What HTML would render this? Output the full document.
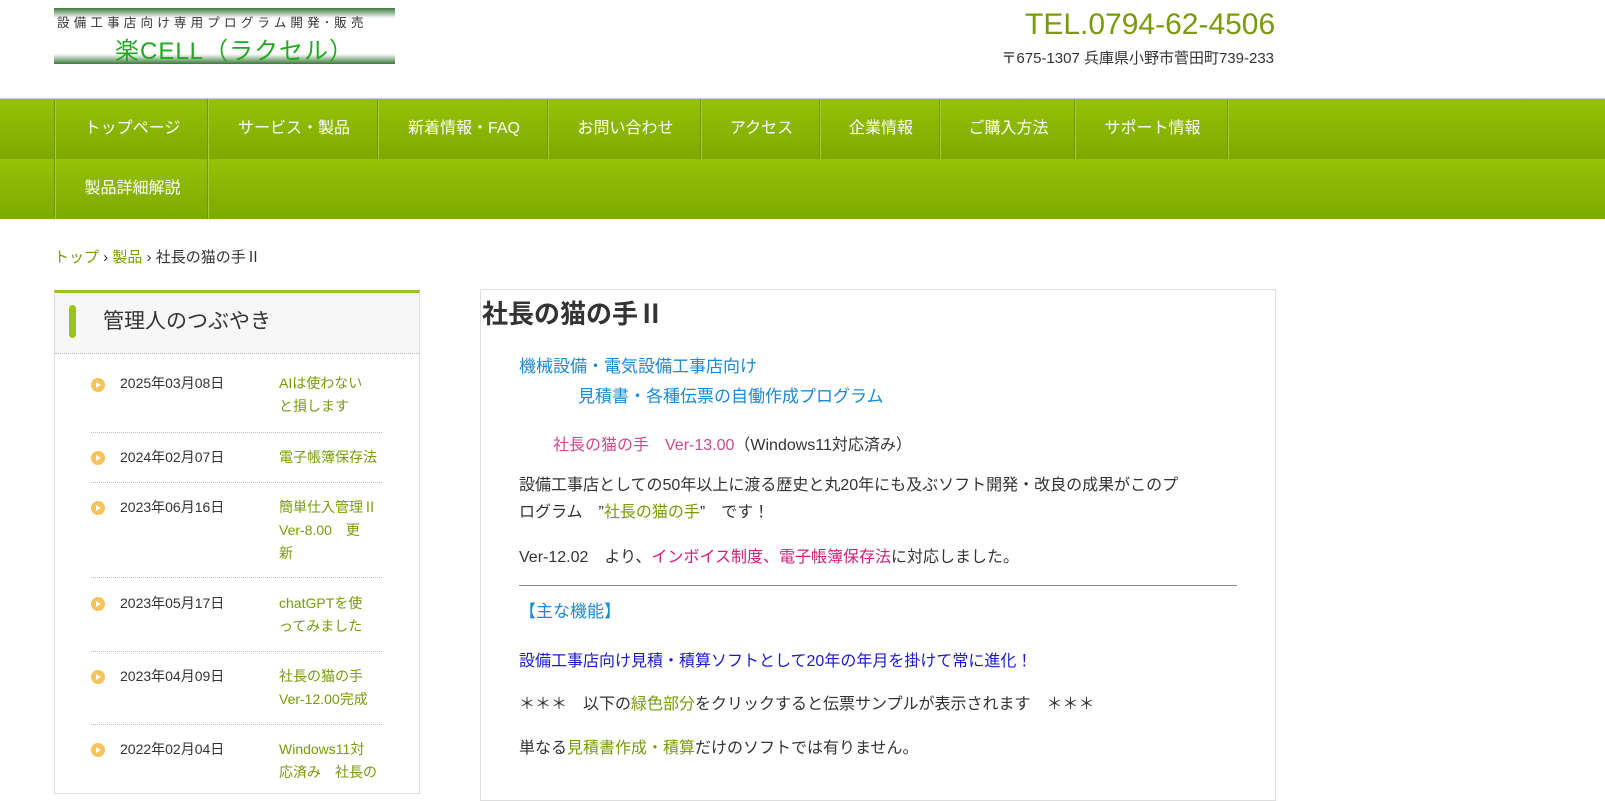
<!DOCTYPE html>
<html><head><meta charset="utf-8"><style>
body{margin:0;width:1605px;height:787px;overflow:hidden;background:#fff;font-family:"Liberation Sans","Noto Sans CJK JP",sans-serif;color:#333}
.a{position:absolute}
.nav{position:absolute;left:0;top:98px;width:1605px;height:120px;background:#8ab500;border-top:1px solid #ccc}
.row{position:absolute;left:0;width:1605px;height:60px;background:linear-gradient(#96c208,#7ea900)}
.it{position:absolute;height:60px;line-height:60px;color:#fff;font-size:16px;text-align:center;border-left:1px solid #a6cc40;box-shadow:-1px 0 0 #6f9800}
.g{color:#7a9a0a}
.dot{position:absolute;width:14px;height:14px;border-radius:7px;background:#f7c35a}
.dot:after{content:"";position:absolute;left:5px;top:4px;border-left:5px solid #fff;border-top:3px solid transparent;border-bottom:3px solid transparent}
.hr{position:absolute;left:91px;width:291px;border-top:1px dotted #bbb}
.e{position:absolute;font-size:14px;line-height:23px}
</style></head><body>
<div class="a" style="left:54px;top:8px;width:341px;height:56px;background:linear-gradient(#3a7a3a,#fff 18%,#fff 82%,#3a7a3a)"></div>
<div class="a" style="left:57px;top:12px;font-size:12.5px;letter-spacing:4.2px;color:#333">設備工事店向け専用プログラム開発･販売</div>
<div class="a" style="left:115px;top:31px;font-size:24px;color:#1faa1f;letter-spacing:1px">楽CELL（ラクセル）</div>
<div class="a" style="left:1025px;top:8px;font-size:30px;color:#7a9a0a">TEL.0794-62-4506</div>
<div class="a" style="right:331px;top:47px;font-size:15px;color:#333">〒675-1307 兵庫県小野市菅田町739-233</div>
<div class="nav">
<div class="row" style="top:0"></div><div class="row" style="top:60px"></div>
<div class="it" style="left:55px;width:153px">トップページ</div>
<div class="it" style="left:208px;width:170px">サービス・製品</div>
<div class="it" style="left:378px;width:170px">新着情報・FAQ</div>
<div class="it" style="left:548px;width:153px">お問い合わせ</div>
<div class="it" style="left:701px;width:119px">アクセス</div>
<div class="it" style="left:820px;width:120px">企業情報</div>
<div class="it" style="left:940px;width:135px">ご購入方法</div>
<div class="it" style="left:1075px;width:153px">サポート情報</div>
<div class="it" style="left:1228px;width:0"></div>
<div class="it" style="left:55px;width:153px;top:60px">製品詳細解説</div>
<div class="it" style="left:208px;width:0;top:60px"></div>
</div>
<div class="a" style="left:54px;top:246px;font-size:15px"><span class="g">トップ</span> › <span class="g">製品</span> › 社長の猫の手Ⅱ</div>
<div class="a" style="left:54px;top:290px;width:364px;height:500px;border:1px solid #ddd;border-top:3px solid #9ac31c"></div>
<div class="a" style="left:55px;top:293px;width:364px;height:60px;background:#f7f7f7;border-bottom:1px dotted #bbb"></div>
<div class="a" style="left:69px;top:305px;width:7px;height:33px;border-radius:4px;background:#9ac31c"></div>
<div class="a" style="left:103px;top:305px;font-size:21px">管理人のつぶやき</div>
<div class="dot" style="left:91px;top:378px"></div><div class="e" style="left:120px;top:372px">2025年03月08日</div><div class="e g" style="left:279px;top:372px">AIは使わない<br>と損します</div>
<div class="hr" style="top:432px"></div>
<div class="dot" style="left:91px;top:451px"></div><div class="e" style="left:120px;top:446px">2024年02月07日</div><div class="e g" style="left:279px;top:446px">電子帳簿保存法</div>
<div class="hr" style="top:482px"></div>
<div class="dot" style="left:91px;top:501px"></div><div class="e" style="left:120px;top:496px">2023年06月16日</div><div class="e g" style="left:279px;top:496px">簡単仕入管理Ⅱ<br>Ver-8.00　更<br>新</div>
<div class="hr" style="top:577px"></div>
<div class="dot" style="left:91px;top:597px"></div><div class="e" style="left:120px;top:592px">2023年05月17日</div><div class="e g" style="left:279px;top:592px">chatGPTを使<br>ってみました</div>
<div class="hr" style="top:651px"></div>
<div class="dot" style="left:91px;top:670px"></div><div class="e" style="left:120px;top:665px">2023年04月09日</div><div class="e g" style="left:279px;top:665px">社長の猫の手<br>Ver-12.00完成</div>
<div class="hr" style="top:724px"></div>
<div class="dot" style="left:91px;top:743px"></div><div class="e" style="left:120px;top:738px">2022年02月04日</div><div class="e g" style="left:279px;top:738px">Windows11対<br>応済み　社長の</div>
<div class="a" style="left:480px;top:289px;width:794px;height:510px;border:1px solid #ddd"></div>
<div class="a" style="left:482px;top:294px;font-size:26px;font-weight:bold">社長の猫の手Ⅱ</div>
<div class="a" style="left:519px;top:352px;font-size:17px;color:#1a8ad4;line-height:30px">機械設備・電気設備工事店向け<br><span style="padding-left:59px">見積書・各種伝票の自働作成プログラム</span></div>
<div class="a" style="left:553px;top:431px;font-size:16px"><span style="color:#d04a8a">社長の猫の手　Ver-13.00</span>（Windows11対応済み）</div>
<div class="a" style="left:519px;top:472px;font-size:16px;line-height:27px;width:712px">設備工事店としての50年以上に渡る歴史と丸20年にも及ぶソフト開発・改良の成果がこのプ<br>ログラム　”<span class="g">社長の猫の手</span>”　です！</div>
<div class="a" style="left:519px;top:543px;font-size:16px">Ver-12.02　より、<span style="color:#d0207a">インボイス制度、電子帳簿保存法</span>に対応しました。</div>
<div class="a" style="left:519px;top:585px;width:718px;border-top:1px solid #888"></div>
<div class="a" style="left:519px;top:597px;font-size:17px;color:#1a8ad4">【主な機能】</div>
<div class="a" style="left:519px;top:647px;font-size:16px;color:#1a1acc">設備工事店向け見積・積算ソフトとして20年の年月を掛けて常に進化！</div>
<div class="a" style="left:519px;top:690px;font-size:16px">＊＊＊　以下の<span class="g">緑色部分</span>をクリックすると伝票サンプルが表示されます　＊＊＊</div>
<div class="a" style="left:519px;top:734px;font-size:16px">単なる<span class="g">見積書作成・積算</span>だけのソフトでは有りません。</div>
</body></html>
